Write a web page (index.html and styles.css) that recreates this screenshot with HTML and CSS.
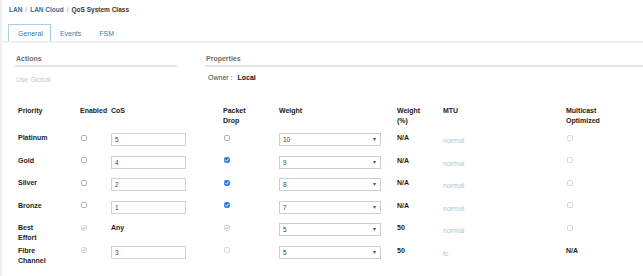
FILE: index.html
```html
<!DOCTYPE html>
<html lang="en">
<head>
    <meta charset="UTF-8">
    <meta name="viewport" content="width=device-width, initial-scale=1.0">
    <title>QoS System Class</title>
    <link rel="stylesheet" href="styles.css">
</head>
<body>
    <main class="page">
        <nav class="crumbs">
            <a href="#">LAN</a><span class="sep">/</span><a href="#">LAN Cloud</a><span class="sep">/</span><span class="current">QoS System Class</span>
        </nav>

        <div class="tabs">
            <a class="tab active" href="#">General</a>
            <a class="tab" href="#">Events</a>
            <a class="tab" href="#">FSM</a>
        </div>

        <div class="panels">
            <section class="panel actions">
                <h3>Actions</h3>
                <p class="muted">Use Global</p>
            </section>
            <section class="panel props">
                <h3>Properties</h3>
                <p class="owner">Owner : <strong>Local</strong></p>
            </section>
        </div>

        <table class="qos">
            <colgroup>
                <col class="c-prio"><col class="c-en"><col class="c-cos"><col class="c-drop">
                <col class="c-weight"><col class="c-pct"><col class="c-mtu"><col class="c-multi">
            </colgroup>
            <thead>
                <tr>
                    <th>Priority</th>
                    <th>Enabled</th>
                    <th>CoS</th>
                    <th>Packet<br>Drop</th>
                    <th>Weight</th>
                    <th>Weight<br>(%)</th>
                    <th>MTU</th>
                    <th>Multicast<br>Optimized</th>
                </tr>
            </thead>
            <tbody>
                <tr>
                    <td class="name">Platinum</td>
                    <td><svg class="cb" viewBox="0 0 6 6"><rect x="0.5" y="0.5" width="5" height="5" rx="1.2"/></svg></td>
                    <td><div class="field">5</div></td>
                    <td><svg class="cb" viewBox="0 0 6 6"><rect x="0.5" y="0.5" width="5" height="5" rx="1.2"/></svg></td>
                    <td><div class="field select">10<span class="caret">▾</span></div></td>
                    <td class="bold">N/A</td>
                    <td class="mtu">normal</td>
                    <td><svg class="cb dis" viewBox="0 0 6 6"><rect x="0.5" y="0.5" width="5" height="5" rx="1.2"/></svg></td>
                </tr>
                <tr>
                    <td class="name">Gold</td>
                    <td><svg class="cb" viewBox="0 0 6 6"><rect x="0.5" y="0.5" width="5" height="5" rx="1.2"/></svg></td>
                    <td><div class="field">4</div></td>
                    <td><svg class="cb on" viewBox="0 0 6 6"><rect x="0.5" y="0.5" width="5" height="5" rx="1.2"/><path d="M1.5 3.1l1.1 1.1 1.9-2.3"/></svg></td>
                    <td><div class="field select">9<span class="caret">▾</span></div></td>
                    <td class="bold">N/A</td>
                    <td class="mtu">normal</td>
                    <td><svg class="cb dis" viewBox="0 0 6 6"><rect x="0.5" y="0.5" width="5" height="5" rx="1.2"/></svg></td>
                </tr>
                <tr>
                    <td class="name">Silver</td>
                    <td><svg class="cb" viewBox="0 0 6 6"><rect x="0.5" y="0.5" width="5" height="5" rx="1.2"/></svg></td>
                    <td><div class="field">2</div></td>
                    <td><svg class="cb on" viewBox="0 0 6 6"><rect x="0.5" y="0.5" width="5" height="5" rx="1.2"/><path d="M1.5 3.1l1.1 1.1 1.9-2.3"/></svg></td>
                    <td><div class="field select">8<span class="caret">▾</span></div></td>
                    <td class="bold">N/A</td>
                    <td class="mtu">normal</td>
                    <td><svg class="cb dis" viewBox="0 0 6 6"><rect x="0.5" y="0.5" width="5" height="5" rx="1.2"/></svg></td>
                </tr>
                <tr>
                    <td class="name">Bronze</td>
                    <td><svg class="cb" viewBox="0 0 6 6"><rect x="0.5" y="0.5" width="5" height="5" rx="1.2"/></svg></td>
                    <td><div class="field">1</div></td>
                    <td><svg class="cb on" viewBox="0 0 6 6"><rect x="0.5" y="0.5" width="5" height="5" rx="1.2"/><path d="M1.5 3.1l1.1 1.1 1.9-2.3"/></svg></td>
                    <td><div class="field select">7<span class="caret">▾</span></div></td>
                    <td class="bold">N/A</td>
                    <td class="mtu">normal</td>
                    <td><svg class="cb dis" viewBox="0 0 6 6"><rect x="0.5" y="0.5" width="5" height="5" rx="1.2"/></svg></td>
                </tr>
                <tr>
                    <td class="name">Best<br>Effort</td>
                    <td><svg class="cb dis ticked" viewBox="0 0 6 6"><rect x="0.5" y="0.5" width="5" height="5" rx="1.2"/><path d="M1.5 3.1l1.1 1.1 1.9-2.3"/></svg></td>
                    <td class="bold">Any</td>
                    <td><svg class="cb dis ticked" viewBox="0 0 6 6"><rect x="0.5" y="0.5" width="5" height="5" rx="1.2"/><path d="M1.5 3.1l1.1 1.1 1.9-2.3"/></svg></td>
                    <td><div class="field select">5<span class="caret">▾</span></div></td>
                    <td class="bold">50</td>
                    <td class="mtu">normal</td>
                    <td><svg class="cb dis" viewBox="0 0 6 6"><rect x="0.5" y="0.5" width="5" height="5" rx="1.2"/></svg></td>
                </tr>
                <tr>
                    <td class="name">Fibre<br>Channel</td>
                    <td><svg class="cb dis ticked" viewBox="0 0 6 6"><rect x="0.5" y="0.5" width="5" height="5" rx="1.2"/><path d="M1.5 3.1l1.1 1.1 1.9-2.3"/></svg></td>
                    <td><div class="field">3</div></td>
                    <td><svg class="cb dis" viewBox="0 0 6 6"><rect x="0.5" y="0.5" width="5" height="5" rx="1.2"/></svg></td>
                    <td><div class="field select">5<span class="caret">▾</span></div></td>
                    <td class="bold">50</td>
                    <td class="mtu">fc</td>
                    <td class="bold">N/A</td>
                </tr>
            </tbody>
        </table>
    </main>
</body>
</html>
```

FILE: styles.css
```css
/* Base */
* {
    margin: 0;
    padding: 0;
    box-sizing: border-box;
}

body {
    background: #ffffff;
    box-shadow: inset 2px 0 0 #efefef;
    min-height: 100vh;
}

.page {
    font-family: 'Liberation Sans', Arial, sans-serif;
    font-size: 7px;
    color: #222222;
}

a {
    text-decoration: none;
}

/* Breadcrumb */
.crumbs {
    padding: 5px 9px 0;
    height: 14px;
    line-height: 9px;
    font-size: 6.5px;
    font-weight: bold;
}

.crumbs a {
    color: #2f6f96;
}

.crumbs .sep {
    color: #8a8a8a;
    font-weight: normal;
    margin: 0 3px;
}

.crumbs .current {
    color: #333333;
}

/* Tabs */
.tabs {
    display: flex;
    margin-top: 10px;
    padding-left: 8px;
    height: 19px;
    border-bottom: 2px solid #eeeeee;
}

.tab {
    line-height: 17px;
    padding: 0 8px;
    color: #3a7fa8;
    border: 1px solid transparent;
    border-bottom: none;
}

.tab.active {
    padding: 0 7px 0 9px;
    border-color: #aacfe5;
    background: #ffffff;
}

/* Panels */
.panels {
    display: flex;
    gap: 28px;
    margin-top: 11px;
    padding-left: 15px;
}

.panel h3 {
    font-size: 7px;
    line-height: 9px;
    font-weight: bold;
    color: #6f6f6f;
    padding: 0 0 2px 1px;
    border-bottom: 2px solid #e4e4e4;
}

.actions {
    width: 162px;
}

.props {
    flex: 1;
}

.muted {
    margin-top: 8px;
    line-height: 9px;
    padding-left: 1px;
    color: #c9c9c9;
}

.owner {
    margin-top: 6px;
    line-height: 9px;
    padding-left: 3px;
    color: #444444;
}

.owner strong {
    color: #111111;
    margin-left: 3px;
}

/* QoS table */
.qos {
    margin: 20px 0 0 18px;
    border-collapse: collapse;
    table-layout: fixed;
    width: 618px;
}

.c-prio { width: 62px; }
.c-en { width: 31px; }
.c-cos { width: 112px; }
.c-drop { width: 56px; }
.c-weight { width: 118px; }
.c-pct { width: 46px; }
.c-mtu { width: 123px; }
.c-multi { width: 70px; }

.qos th {
    height: 29px;
    text-align: left;
    vertical-align: top;
    line-height: 10px;
    font-weight: bold;
    color: #222222;
    padding: 1.5px 0 0;
}

.qos td {
    height: 22.5px;
    vertical-align: top;
    line-height: 10px;
    padding: 0;
}

.qos .name,
.qos .bold {
    font-weight: bold;
    color: #1e1e1e;
}

.qos .mtu {
    padding-top: 3px;
    color: #c2c2c2;
}

/* Checkboxes */
.cb {
    display: block;
    width: 6px;
    height: 6px;
    margin: 1.5px 0 0 1px;
}

.cb rect {
    fill: #ffffff;
    stroke: #9a9a9a;
    stroke-width: 0.8;
}

.cb path {
    fill: none;
    stroke: #ffffff;
    stroke-width: 0.9;
    stroke-linecap: round;
    stroke-linejoin: round;
}

.cb.on rect {
    fill: #2d7be4;
    stroke: #2d7be4;
}

.cb.dis rect {
    stroke: #cfcfcf;
}

.cb.ticked path {
    stroke: #a8a8a8;
}

/* Inputs */
.field {
    width: 75px;
    height: 13px;
    border: 1px solid #d2d2d2;
    padding-left: 3px;
    line-height: 11px;
    font-size: 6.5px;
    color: #444444;
}

.field.select {
    width: 102px;
    display: flex;
    justify-content: space-between;
    padding-right: 4px;
    border-color: #cfcfcf;
}

.caret {
    font-size: 6px;
    color: #555555;
}
```
